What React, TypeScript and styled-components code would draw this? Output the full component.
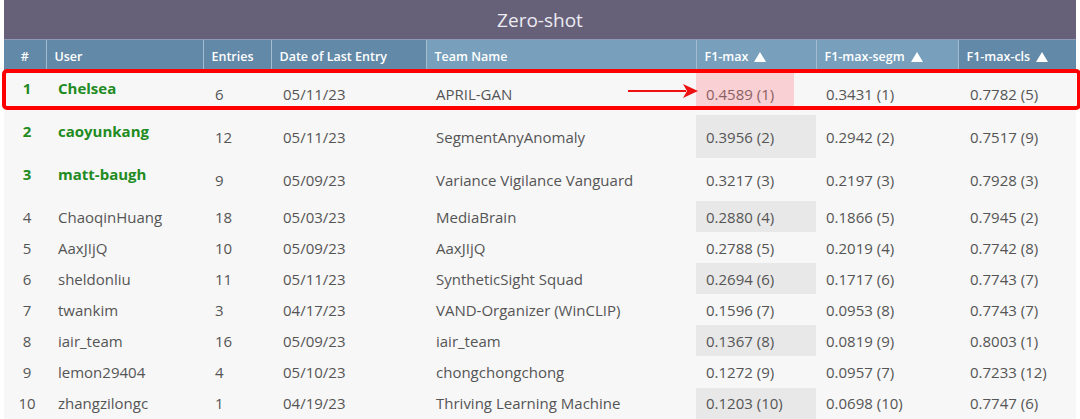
import { FC } from 'react';
import styled, { createGlobalStyle } from 'styled-components';

const GlobalStyle = createGlobalStyle`
	html, body {
		margin: 0;
		padding: 0;
		background: #ffffff;
	}
	body {
		padding: 0 4px;
		font-family: 'Open Sans', 'Noto Sans', sans-serif;
	}
`;

type Row = {
	rank: number;
	user: string;
	entries: number;
	date: string;
	team: string;
	f1: string;
	segm: string;
	cls: string;
};

const rows: Row[] = [
	{ rank: 1, user: 'Chelsea', entries: 6, date: '05/11/23', team: 'APRIL-GAN', f1: '0.4589 (1)', segm: '0.3431 (1)', cls: '0.7782 (5)' },
	{ rank: 2, user: 'caoyunkang', entries: 12, date: '05/11/23', team: 'SegmentAnyAnomaly', f1: '0.3956 (2)', segm: '0.2942 (2)', cls: '0.7517 (9)' },
	{ rank: 3, user: 'matt-baugh', entries: 9, date: '05/09/23', team: 'Variance Vigilance Vanguard', f1: '0.3217 (3)', segm: '0.2197 (3)', cls: '0.7928 (3)' },
	{ rank: 4, user: 'ChaoqinHuang', entries: 18, date: '05/03/23', team: 'MediaBrain', f1: '0.2880 (4)', segm: '0.1866 (5)', cls: '0.7945 (2)' },
	{ rank: 5, user: 'AaxJIjQ', entries: 10, date: '05/09/23', team: 'AaxJIjQ', f1: '0.2788 (5)', segm: '0.2019 (4)', cls: '0.7742 (8)' },
	{ rank: 6, user: 'sheldonliu', entries: 11, date: '05/11/23', team: 'SyntheticSight Squad', f1: '0.2694 (6)', segm: '0.1717 (6)', cls: '0.7743 (7)' },
	{ rank: 7, user: 'twankim', entries: 3, date: '04/17/23', team: 'VAND-Organizer (WinCLIP)', f1: '0.1596 (7)', segm: '0.0953 (8)', cls: '0.7743 (7)' },
	{ rank: 8, user: 'iair_team', entries: 16, date: '05/09/23', team: 'iair_team', f1: '0.1367 (8)', segm: '0.0819 (9)', cls: '0.8003 (1)' },
	{ rank: 9, user: 'lemon29404', entries: 4, date: '05/10/23', team: 'chongchongchong', f1: '0.1272 (9)', segm: '0.0957 (7)', cls: '0.7233 (12)' },
	{ rank: 10, user: 'zhangzilongc', entries: 1, date: '04/19/23', team: 'Thriving Learning Machine', f1: '0.1203 (10)', segm: '0.0698 (10)', cls: '0.7747 (6)' }
];

const columns: { label: string; width: number; tone: 'dark' | 'light'; sort?: boolean; center?: boolean }[] = [
	{ label: '#', width: 42, tone: 'dark', center: true },
	{ label: 'User', width: 157, tone: 'dark' },
	{ label: 'Entries', width: 68, tone: 'dark' },
	{ label: 'Date of Last Entry', width: 155, tone: 'dark' },
	{ label: 'Team Name', width: 270, tone: 'light' },
	{ label: 'F1-max', width: 120, tone: 'light', sort: true },
	{ label: 'F1-max-segm', width: 142, tone: 'light', sort: true },
	{ label: 'F1-max-cls', width: 118, tone: 'dark', sort: true }
];

const Board = styled.div`
	position: relative;
	width: 1072px;
	background: #f7f7f7;
`;

const TitleBar = styled.div`
	height: 39px;
	display: flex;
	align-items: center;
	justify-content: center;
	background: #666079;
	color: #ecebf2;
	font-size: 19px;
	font-weight: 400;
`;

const Table = styled.table`
	width: 100%;
	border-collapse: collapse;
	table-layout: fixed;
`;

const HeadCell = styled.th<{ $tone: 'dark' | 'light'; $center?: boolean }>`
	height: 32px;
	padding: 0 8px;
	background: ${(p) => (p.$tone === 'dark' ? '#6389a8' : '#789fbc')};
	border-left: 1px solid #a3bccf;
	border-top: 1px solid #8c98b4;
	color: #ffffff;
	font-size: 12.5px;
	font-weight: 600;
	text-align: ${(p) => (p.$center ? 'center' : 'left')};
	white-space: nowrap;

	&:first-child {
		border-left: none;
	}
`;

// solid white triangle that marks a sortable column
const SortMark = styled.span`
	display: inline-block;
	margin-left: 6px;
	width: 0;
	height: 0;
	border-left: 6px solid transparent;
	border-right: 6px solid transparent;
	border-bottom: 10px solid #ffffff;
	vertical-align: -1px;
`;

const BodyRow = styled.tr<{ $top: boolean }>`
	height: ${(p) => (p.$top ? '43px' : '31.1px')};
`;

const Cell = styled.td<{ $shaded?: boolean; $center?: boolean; $lead?: boolean }>`
	padding: ${(p) => (p.$lead ? '0 6px 0 12px' : '0 6px 0 10px')};
	background: ${(p) => (p.$shaded ? '#e8e8e8' : 'transparent')};
	color: #555555;
	font-size: 15px;
	text-align: ${(p) => (p.$center ? 'center' : 'left')};
	white-space: nowrap;
	vertical-align: middle;
	line-height: 20px;
`;

const RankCell = styled(Cell)<{ $winner: boolean }>`
	color: ${(p) => (p.$winner ? '#228b22' : '#555555')};
	font-weight: ${(p) => (p.$winner ? 700 : 400)};
	vertical-align: ${(p) => (p.$winner ? 'top' : 'middle')};
	padding-top: ${(p) => (p.$winner ? '6px' : '0')};
`;

const UserCell = styled(Cell)<{ $winner: boolean }>`
	vertical-align: ${(p) => (p.$winner ? 'top' : 'middle')};
	padding-top: ${(p) => (p.$winner ? '6px' : '0')};
`;

const UserName = styled.span<{ $winner: boolean }>`
	color: ${(p) => (p.$winner ? '#228b22' : '#555555')};
	font-weight: ${(p) => (p.$winner ? 700 : 400)};
`;

const Highlight = styled.div`
	position: absolute;
	left: -2px;
	top: 69px;
	width: 1071px;
	height: 33px;
	border: 4px solid #ff0000;
	border-radius: 5px;
	pointer-events: none;
`;

const PinkMark = styled.div`
	position: absolute;
	left: 692px;
	top: 72px;
	width: 98px;
	height: 34px;
	background: rgba(255, 120, 130, 0.3);
	pointer-events: none;
`;

const Arrow = styled.svg`
	position: absolute;
	left: 622px;
	top: 83px;
	pointer-events: none;
`;

const App: FC = () => {
	return (
		<>
			<GlobalStyle />
			<Board>
				<TitleBar>Zero-shot</TitleBar>
				<Table>
					<colgroup>
						{columns.map((c) => (
							<col key={c.label} style={{ width: c.width }} />
						))}
					</colgroup>
					<thead>
						<tr>
							{columns.map((c) => (
								<HeadCell key={c.label} $tone={c.tone} $center={c.center}>
									{c.label}
									{c.sort && <SortMark />}
								</HeadCell>
							))}
						</tr>
					</thead>
					<tbody>
						{rows.map((r) => {
							const winner = r.rank <= 3;
							return (
								<BodyRow key={r.rank} $top={winner}>
									<RankCell $center $winner={winner}>
										{r.rank}
									</RankCell>
									<UserCell $lead $winner={winner}>
										<UserName $winner={winner}>{r.user}</UserName>
									</UserCell>
									<Cell $lead>{r.entries}</Cell>
									<Cell $lead>{r.date}</Cell>
									<Cell>{r.team}</Cell>
									<Cell $shaded={r.rank % 2 === 0}>{r.f1}</Cell>
									<Cell>{r.segm}</Cell>
									<Cell $lead>{r.cls}</Cell>
								</BodyRow>
							);
						})}
					</tbody>
				</Table>
				<PinkMark />
				<Highlight />
				<Arrow width="72" height="16" viewBox="0 0 72 16">
					<line x1="2" y1="8" x2="60" y2="8" stroke="#ee1111" strokeWidth="2" />
					<polygon points="57,1 72,8 57,15 61,8" fill="#ee1111" />
				</Arrow>
			</Board>
		</>
	);
};

export default App;
